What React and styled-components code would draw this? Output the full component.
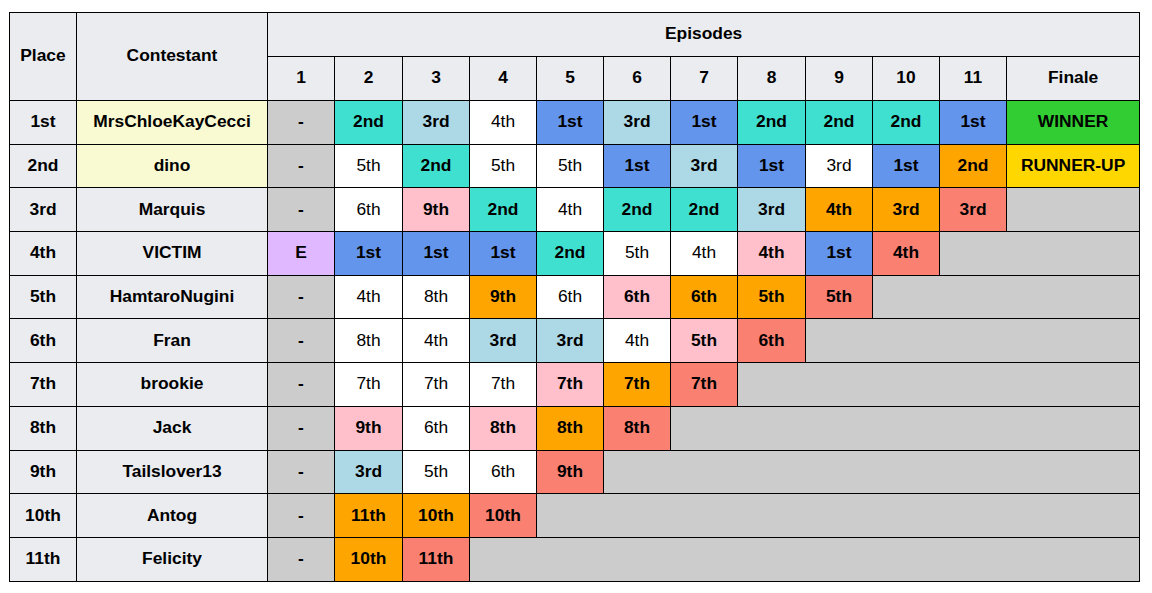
import styled, { createGlobalStyle } from "styled-components";

const GlobalStyle = createGlobalStyle`
	body {
		margin: 0;
		background: #fff;
		font-family: "Liberation Sans", Arial, sans-serif;
	}
`;

const Page = styled.div`
	padding: 12px 0 0 9px;
`;

const Table = styled.table`
	border-collapse: collapse;
	table-layout: fixed;
	width: 1131px;
	font-size: 17.4px;
	line-height: 20px;
	color: #000;
`;

const Head = styled.th`
	background-color: #eaecf0;
	border: 1px solid #000;
	font-weight: bold;
	text-align: center;
	padding: 0 0 3px;
`;

const HeadRow = styled.tr`
	height: 44px;
`;

const Row = styled.tr`
	height: 43.7px;
`;

const Cell = styled.td`
	border: 1px solid #000;
	text-align: center;
	padding: 0 0 2px;
	background-color: ${(props) => props.bg || "#fff"};
	font-weight: ${(props) => (props.bold ? "bold" : "normal")};
`;

const PlaceCell = styled(Cell)`
	background-color: #eaecf0;
	font-weight: bold;
`;

const NameCell = styled(Cell)`
	background-color: ${(props) => (props.top ? "#fafad2" : "#eaecf0")};
	font-weight: bold;
`;

const Filler = styled.td`
	border: 1px solid #000;
	background-color: #cccccc;
`;

const colors = {
	"-": "#cccccc",
	E: "#e0b8ff",
	W: "#ffffff",
	T: "#40e0d0",
	L: "#add8e6",
	B: "#6495ed",
	P: "#ffc0cb",
	O: "#ffa500",
	S: "#fa8072",
	G: "#32cd32",
	Y: "#ffd700",
};

// each result: [text, colour code]; white cells are normal weight
const rows = [
	{ place: "1st", name: "MrsChloeKayCecci", top: true, res: [["-", "-"], ["2nd", "T"], ["3rd", "L"], ["4th", "W"], ["1st", "B"], ["3rd", "L"], ["1st", "B"], ["2nd", "T"], ["2nd", "T"], ["2nd", "T"], ["1st", "B"], ["WINNER", "G"]] },
	{ place: "2nd", name: "dino", top: true, res: [["-", "-"], ["5th", "W"], ["2nd", "T"], ["5th", "W"], ["5th", "W"], ["1st", "B"], ["3rd", "L"], ["1st", "B"], ["3rd", "W"], ["1st", "B"], ["2nd", "O"], ["RUNNER-UP", "Y"]] },
	{ place: "3rd", name: "Marquis", res: [["-", "-"], ["6th", "W"], ["9th", "P"], ["2nd", "T"], ["4th", "W"], ["2nd", "T"], ["2nd", "T"], ["3rd", "L"], ["4th", "O"], ["3rd", "O"], ["3rd", "S"]] },
	{ place: "4th", name: "VICTIM", res: [["E", "E"], ["1st", "B"], ["1st", "B"], ["1st", "B"], ["2nd", "T"], ["5th", "W"], ["4th", "W"], ["4th", "P"], ["1st", "B"], ["4th", "S"]] },
	{ place: "5th", name: "HamtaroNugini", res: [["-", "-"], ["4th", "W"], ["8th", "W"], ["9th", "O"], ["6th", "W"], ["6th", "P"], ["6th", "O"], ["5th", "O"], ["5th", "S"]] },
	{ place: "6th", name: "Fran", res: [["-", "-"], ["8th", "W"], ["4th", "W"], ["3rd", "L"], ["3rd", "L"], ["4th", "W"], ["5th", "P"], ["6th", "S"]] },
	{ place: "7th", name: "brookie", res: [["-", "-"], ["7th", "W"], ["7th", "W"], ["7th", "W"], ["7th", "P"], ["7th", "O"], ["7th", "S"]] },
	{ place: "8th", name: "Jack", res: [["-", "-"], ["9th", "P"], ["6th", "W"], ["8th", "P"], ["8th", "O"], ["8th", "S"]] },
	{ place: "9th", name: "Tailslover13", res: [["-", "-"], ["3rd", "L"], ["5th", "W"], ["6th", "W"], ["9th", "S"]] },
	{ place: "10th", name: "Antog", res: [["-", "-"], ["11th", "O"], ["10th", "O"], ["10th", "S"]] },
	{ place: "11th", name: "Felicity", res: [["-", "-"], ["10th", "O"], ["11th", "S"]] },
];

const widths = [67, 191, 67, 68, 67, 67, 67, 67, 67, 68, 67, 67, 67, 133];
const TOTAL = 12;

const App = () => {
	return (
		<Page>
			<GlobalStyle />
			<Table>
				<colgroup>
					{widths.map((w, i) => (
						<col key={i} style={{ width: w }} />
					))}
				</colgroup>
				<thead>
					<HeadRow>
						<Head rowSpan={2}>Place</Head>
						<Head rowSpan={2}>Contestant</Head>
						<Head colSpan={TOTAL}>Episodes</Head>
					</HeadRow>
					<HeadRow>
						{Array.from({ length: 11 }, (_, i) => (
							<Head key={i}>{i + 1}</Head>
						))}
						<Head>Finale</Head>
					</HeadRow>
				</thead>
				<tbody>
					{rows.map((r) => (
						<Row key={r.place}>
							<PlaceCell>{r.place}</PlaceCell>
							<NameCell top={r.top}>{r.name}</NameCell>
							{r.res.map(([text, c], i) => (
								<Cell key={i} bg={colors[c]} bold={c !== "W"}>
									{text}
								</Cell>
							))}
							{r.res.length < TOTAL && <Filler colSpan={TOTAL - r.res.length} />}
						</Row>
					))}
				</tbody>
			</Table>
		</Page>
	);
};

export default App;
